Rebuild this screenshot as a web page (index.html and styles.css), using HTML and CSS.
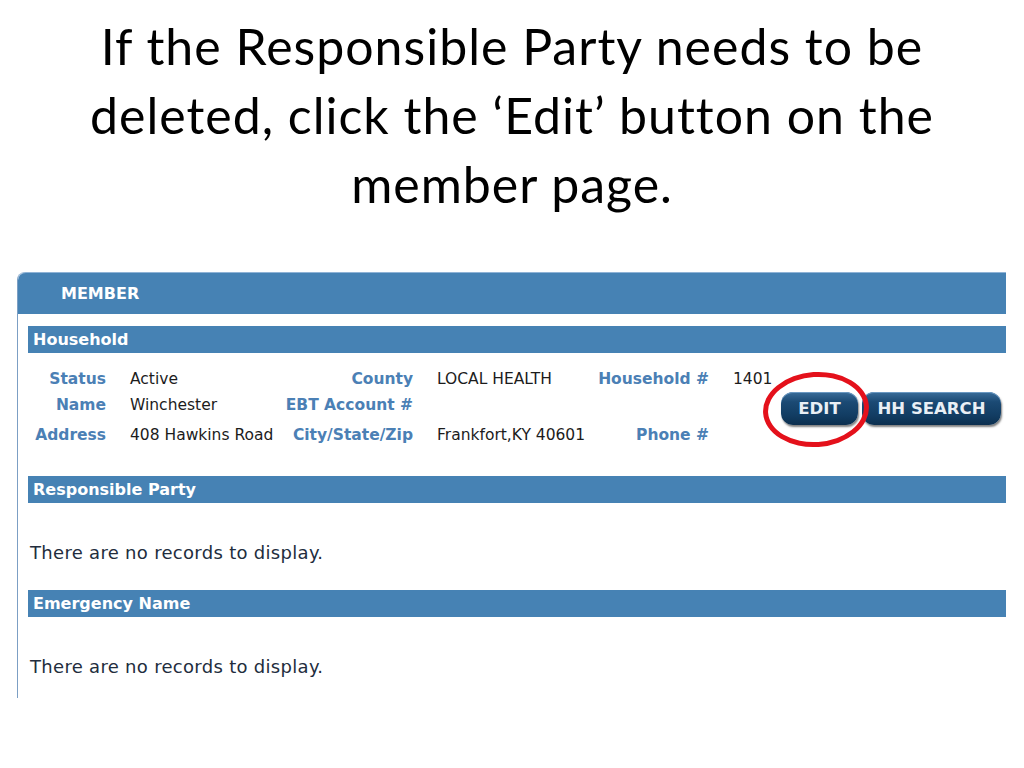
FILE: index.html
```html
<!DOCTYPE html>
<html lang="en">
<head>
<meta charset="UTF-8" />
<title>Member page</title>
<link rel="stylesheet" href="styles.css">
</head>
<body>

<h1 class="slide-title">If the Responsible Party needs to be deleted, click the ‘Edit’ button on the member page.</h1>

<div class="panel">
  <div class="panel-head">MEMBER</div>

  <div class="panel-body">
    <div class="section-bar">Household</div>

    <div class="household">
      <div class="info-grid">
        <span class="lbl">Status</span><span class="val">Active</span>
        <span class="lbl">County</span><span class="val">LOCAL HEALTH</span>
        <span class="lbl">Household #</span><span class="val">1401</span>

        <span class="lbl">Name</span><span class="val">Winchester</span>
        <span class="lbl">EBT Account #</span><span class="val"></span>
        <span class="lbl"></span><span class="val"></span>

        <span class="lbl">Address</span><span class="val">408 Hawkins Road</span>
        <span class="lbl">City/State/Zip</span><span class="val">Frankfort,KY 40601</span>
        <span class="lbl">Phone #</span><span class="val"></span>
      </div>

      <div class="actions">
        <button class="btn btn-edit">EDIT</button>
        <button class="btn btn-search">HH SEARCH</button>
        <span class="circle"></span>
      </div>
    </div>

    <div class="section-bar">Responsible Party</div>
    <p class="empty">There are no records to display.</p>

    <div class="section-bar">Emergency Name</div>
    <p class="empty">There are no records to display.</p>
  </div>
</div>

</body>
</html>
```

FILE: styles.css
```css
/* Slide */
body {
  margin: 0;
  background: #ffffff;
  width: 1024px;
  height: 768px;
  overflow: hidden;
}
.slide-title {
  font-family: Lato, "Open Sans", sans-serif;
  font-weight: 400;
  font-size: 50px;
  letter-spacing: 1px;
  line-height: 69px;
  color: #000;
  text-align: center;
  margin: 12px auto 0;
  width: 960px;
}

/* Member panel */
.panel {
  margin: 53px 0 0 17px;
  width: 988px;
  border-left: 1px solid #7c9fc4;
  border-top-left-radius: 8px;
  height: 426px;
  font-family: "DejaVu Sans", Verdana, sans-serif;
  font-size: 15.5px;
}
.panel-head {
  background: #4682b4;
  border-top: 1px solid #8fb3d6;
  border-top-left-radius: 8px;
  height: 41px;
  line-height: 41px;
  padding-left: 43px;
  color: #fff;
  font-weight: bold;
  font-size: 16px;
}
.panel-body {
  padding: 12px 0 0 10px;
}
.section-bar {
  background: #4682b4;
  color: #fff;
  font-weight: bold;
  font-size: 16px;
  height: 27px;
  line-height: 27px;
  padding-left: 5px;
}

/* Household details */
.household {
  display: flex;
  align-items: center;
  padding: 13px 5px 24px 0;
}
.info-grid {
  display: grid;
  grid-template-columns: 78px 172px 135px 160px 136px 52px;
  grid-template-rows: 26px 26px 34px;
  align-items: center;
}
.lbl {
  color: #4b80b5;
  font-weight: bold;
  text-align: right;
  white-space: nowrap;
}
.val {
  color: #1c1c1c;
  padding-left: 24px;
  white-space: nowrap;
}
.actions {
  position: relative;
  margin-left: auto;
  display: flex;
  gap: 4px;
  margin-bottom: 2px;
}
.btn {
  font-family: "DejaVu Sans", Verdana, sans-serif;
  font-weight: bold;
  font-size: 16.5px;
  color: #e9eff5;
  background: linear-gradient(#3a6d9a, #1b4a74 30%, #123d63 70%, #0c2f4f 100%);
  border: none;
  border-radius: 12px;
  height: 33px;
  padding: 0;
  box-shadow: 1px 2px 2px rgb(0 0 0 / 0.5), inset 0 1px 0 #6a98c2;
}
.btn-edit {
  width: 77px;
}
.btn-search {
  width: 139px;
}
.circle {
  position: absolute;
  left: -18px;
  top: -20px;
  width: 96px;
  height: 65px;
  border: 5px solid #e4111b;
  border-radius: 50%;
  transform: rotate(-4deg);
}

/* Empty lists */
.empty {
  margin: 0;
  padding: 39px 0 26px 2px;
  color: #222d3d;
  font-size: 18px;
  letter-spacing: 0.3px;
  line-height: 22px;
}
```
